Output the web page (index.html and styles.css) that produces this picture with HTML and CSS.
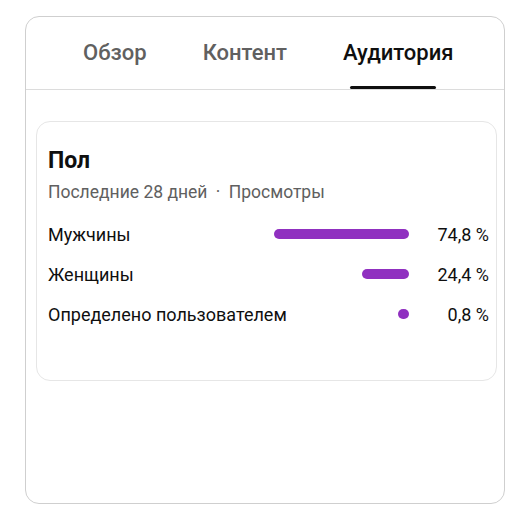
FILE: index.html
```html
<!DOCTYPE html>
<html lang="ru">
<head>
    <meta charset="UTF-8">
    <title>Аудитория</title>
    <link rel="stylesheet" href="styles.css">
</head>
<body>
<div class="panel">
    <div class="tabs">
        <div class="tab">Обзор</div>
        <div class="tab">Контент</div>
        <div class="tab tab--active">
            Аудитория
            <div class="tab-underline"></div>
        </div>
    </div>
    <div class="card">
        <div class="card-title">Пол</div>
        <div class="card-sub">Последние 28 дней <span class="dot">·</span> Просмотры</div>
        <div class="rows">
            <div class="row">
                <div class="row-label">Мужчины</div>
                <div class="track"><div class="bar" style="width: 74.8%"></div></div>
                <div class="row-value">74,8 %</div>
            </div>
            <div class="row">
                <div class="row-label">Женщины</div>
                <div class="track"><div class="bar" style="width: 26%"></div></div>
                <div class="row-value">24,4 %</div>
            </div>
            <div class="row">
                <div class="row-label">Определено пользователем</div>
                <div class="track"><div class="bar" style="width: 0.8%"></div></div>
                <div class="row-value">0,8 %</div>
            </div>
        </div>
    </div>
</div>
</body>
</html>
```

FILE: styles.css
```css
html, body {
    margin: 0;
    background-color: white;
    font-family: Roboto, "Noto Sans", sans-serif;
    color: #0f0f0f;
}

/*外框*/
.panel {
    margin: 16px 0 0 25px;
    width: 480px;
    height: 488px;
    box-sizing: border-box;
    border: 1px solid #cfcfcf;
    border-radius: 14px;
}

/*顶部tabs*/
.tabs {
    display: flex;
    height: 72px;
    padding-left: 57px;
    gap: 56px;
    border-bottom: 1px solid #dcdcdc;
}

.tab {
    display: flex;
    flex-direction: column;
    align-items: center;
    padding-top: 23px;
    font-size: 22px;
    line-height: 26px;
    font-weight: 500;
    color: #606060;
}

.tab--active {
    color: #0f0f0f;
}

.tab-underline {
    margin-top: auto;
    margin-left: -10px;
    width: 86px;
    height: 3px;
    border-radius: 2px;
    background-color: #0f0f0f;
}

/*性别卡片*/
.card {
    margin: 31px 7px 0 10px;
    padding: 26px 7px 44px 11px;
    border: 1px solid #e6e6e6;
    border-radius: 14px;
}

.card-title {
    font-size: 23px;
    line-height: 26px;
    font-weight: 700;
}

.card-sub {
    margin-top: 8px;
    font-size: 17.5px;
    line-height: 20px;
    color: #606060;
}

.card-sub .dot {
    margin: 0 4px;
}

.rows {
    margin-top: 12px;
    padding-bottom: 2px;
}

.row {
    display: grid;
    grid-template-columns: minmax(0, 1fr) 180px 80px;
    align-items: center;
    height: 40px;
    font-size: 18px;
}

.row-label {
    white-space: nowrap;
}

.track {
    display: flex;
    justify-content: flex-end;
}

.bar {
    min-width: 11px;
    height: 10px;
    border-radius: 5px;
    background-color: #9030c0;
}

.row-value {
    text-align: right;
}
```
